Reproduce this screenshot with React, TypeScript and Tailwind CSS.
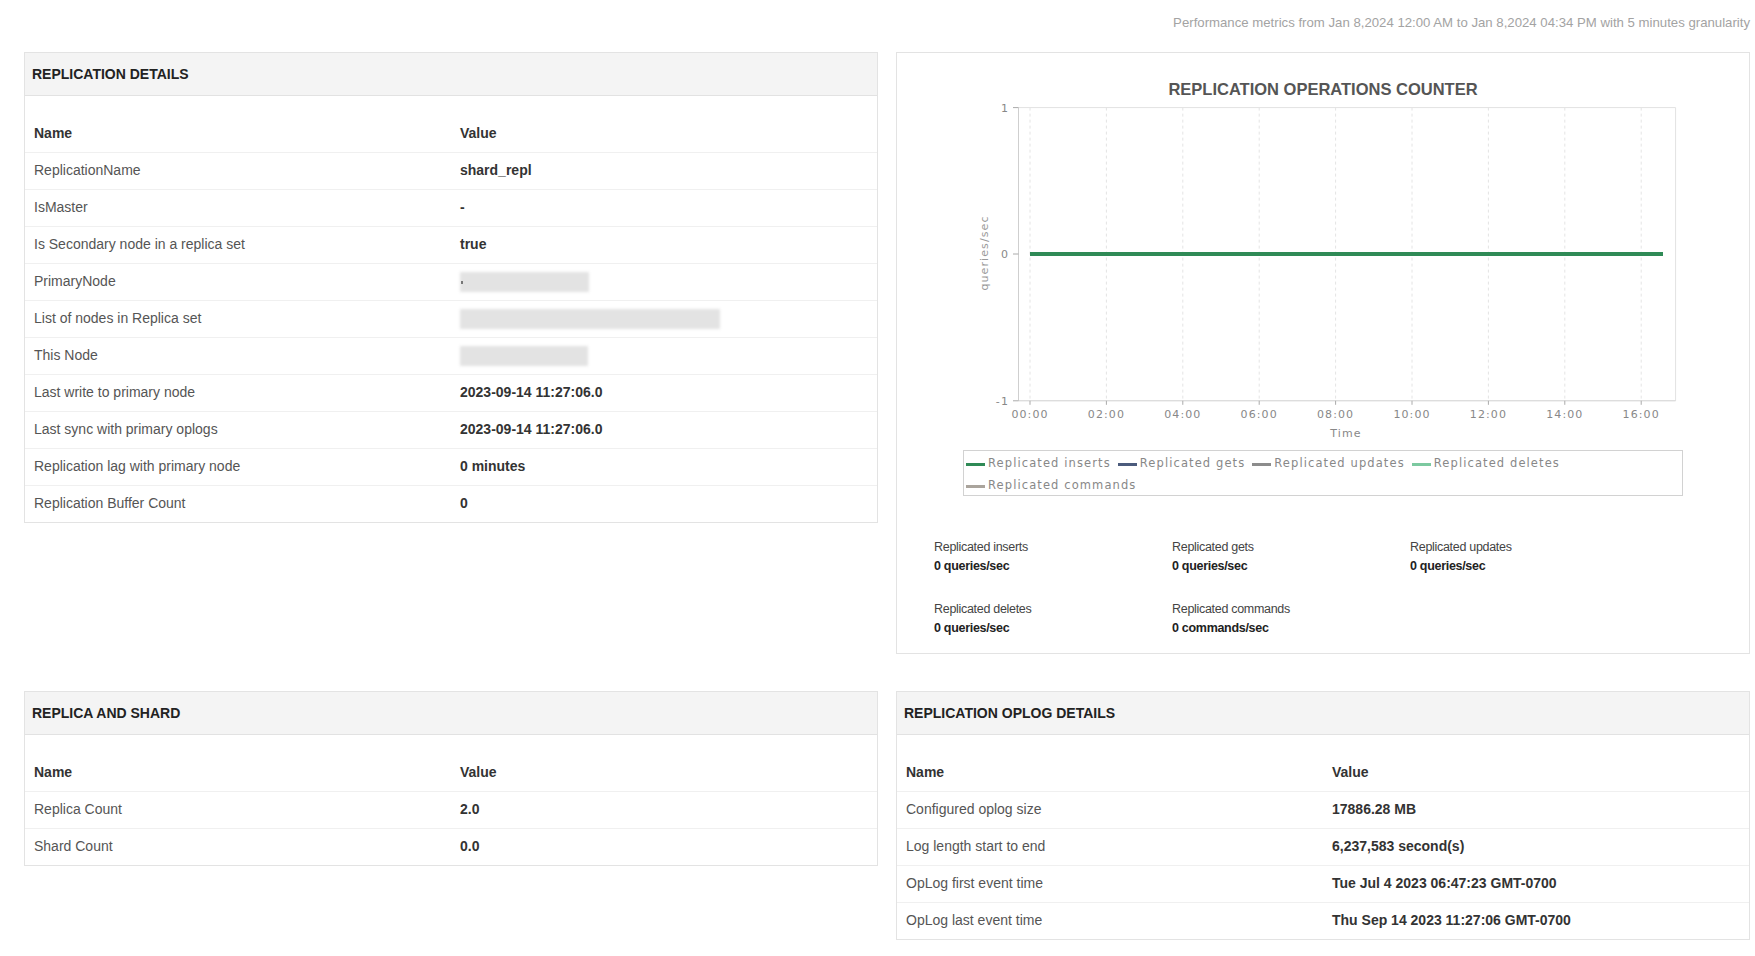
import React from "react"

type Row = { name: string; value?: string; blur?: number; dot?: boolean }

const REPLICATION: Row[] = [
  { name: "ReplicationName", value: "shard_repl" },
  { name: "IsMaster", value: "-" },
  { name: "Is Secondary node in a replica set", value: "true" },
  { name: "PrimaryNode", blur: 129, dot: true },
  { name: "List of nodes in Replica set", blur: 260 },
  { name: "This Node", blur: 128 },
  { name: "Last write to primary node", value: "2023-09-14 11:27:06.0" },
  { name: "Last sync with primary oplogs", value: "2023-09-14 11:27:06.0" },
  { name: "Replication lag with primary node", value: "0 minutes" },
  { name: "Replication Buffer Count", value: "0" },
]

const SHARD: Row[] = [
  { name: "Replica Count", value: "2.0" },
  { name: "Shard Count", value: "0.0" },
]

const OPLOG: Row[] = [
  { name: "Configured oplog size", value: "17886.28 MB" },
  { name: "Log length start to end", value: "6,237,583 second(s)" },
  { name: "OpLog first event time", value: "Tue Jul 4 2023 06:47:23 GMT-0700" },
  { name: "OpLog last event time", value: "Thu Sep 14 2023 11:27:06 GMT-0700" },
]

const LEGEND = [
  { label: "Replicated inserts", color: "#2f8a56" },
  { label: "Replicated gets", color: "#4b5b7c" },
  { label: "Replicated updates", color: "#8c8c8c" },
  { label: "Replicated deletes", color: "#7cc9a0" },
  { label: "Replicated commands", color: "#aaa49c" },
]

const STATS = [
  { label: "Replicated inserts", value: "0 queries/sec" },
  { label: "Replicated gets", value: "0 queries/sec" },
  { label: "Replicated updates", value: "0 queries/sec" },
  { label: "Replicated deletes", value: "0 queries/sec" },
  { label: "Replicated commands", value: "0 commands/sec" },
]

const TICKS = ["00:00", "02:00", "04:00", "06:00", "08:00", "10:00", "12:00", "14:00", "16:00"]

function DetailsPanel({ title, rows }: { title: string; rows: Row[] }) {
  return (
    <div className="border border-[#e3e3e3] bg-white">
      <div className="h-[43px] flex items-center px-[7px] bg-[#f4f4f4] border-b border-[#e2e2e2] text-[14px] font-bold text-[#222]">
        {title}
      </div>
      <div className="pt-[19px]">
        <table className="w-full table-fixed text-[14px]">
          <tbody>
            <tr className="h-[37px]">
              <td className="px-[9px] font-bold text-[#333]">Name</td>
              <td className="px-[9px] font-bold text-[#333]">Value</td>
            </tr>
            {rows.map((r) => (
              <tr key={r.name} className="h-[37px] border-t border-[#f0f0f0]">
                <td className="px-[9px] text-[#555]">{r.name}</td>
                <td className="px-[9px] font-bold text-[#333]">
                  {r.blur ? (
                    <div className="relative h-[20px]">
                      <div
                        className="absolute left-0 top-0 h-[20px] bg-[#e3e3e3] blur-[1.5px]"
                        style={{ width: r.blur }}
                      />
                      {r.dot && <div className="absolute left-[1px] top-[9px] w-[2px] h-[3px] bg-[#777]" />}
                    </div>
                  ) : (
                    r.value
                  )}
                </td>
              </tr>
            ))}
          </tbody>
        </table>
      </div>
    </div>
  )
}

function Chart() {
  const x0 = 121.5
  const x1 = 778.6
  const yTop = 8.6
  const yBot = 301.8
  const yZero = 155
  const axisFont = { fontFamily: "'DejaVu Sans', sans-serif", fontSize: 11, letterSpacing: 1.1 }
  return (
    <svg width={852} height={345} viewBox="0 0 852 345" className="block">
      {TICKS.map((_, i) => {
        const x = 133 + 76.4 * i
        return <line key={i} x1={x} y1={yTop} x2={x} y2={yBot} stroke="#e4e4e4" strokeDasharray="3 3" />
      })}
      <line x1={x0} y1={yTop} x2={x1} y2={yTop} stroke="#e2e2e2" />
      <line x1={x1} y1={yTop} x2={x1} y2={yBot} stroke="#e2e2e2" />
      <line x1={x0} y1={yTop} x2={x0} y2={yBot} stroke="#cfcfcf" />
      <line x1={x0} y1={yBot} x2={x1} y2={yBot} stroke="#cfcfcf" />
      {[
        { y: yTop, t: "1" },
        { y: yZero, t: "0" },
        { y: yBot, t: "-1" },
      ].map((l) => (
        <g key={l.t}>
          <line x1={116} y1={l.y} x2={121.5} y2={l.y} stroke="#aaa" />
          <text x={112} y={l.y + 4} textAnchor="end" fill="#888" style={axisFont}>
            {l.t}
          </text>
        </g>
      ))}
      {TICKS.map((t, i) => {
        const x = 133 + 76.4 * i
        return (
          <g key={t}>
            <line x1={x} y1={yBot} x2={x} y2={yBot + 4} stroke="#aaa" />
            <text x={x} y={319} textAnchor="middle" fill="#888" style={axisFont}>
              {t}
            </text>
          </g>
        )
      })}
      <text x={449} y={337.5} textAnchor="middle" fill="#888" style={axisFont}>
        Time
      </text>
      <text
        x={0}
        y={0}
        transform="translate(91 154) rotate(-90)"
        textAnchor="middle"
        fill="#999"
        style={axisFont}
      >
        queries/sec
      </text>
      <line x1={133} y1={yZero} x2={766} y2={yZero} stroke="#2f8a56" strokeWidth={4} />
    </svg>
  )
}

function ChartPanel() {
  return (
    <div className="border border-[#e3e3e3] bg-white">
      <div className="pt-[26px] text-center text-[16.5px] leading-[20px] font-bold text-[#555]">
        REPLICATION OPERATIONS COUNTER
      </div>
      <Chart />
      <div className="mt-[6px] ml-[66px] w-[720px] h-[46px] border-[1.5px] border-[#d2d2d2] flex flex-wrap content-start gap-x-[7px] pl-[2px] pt-[2px]">
        {LEGEND.map((l) => (
          <div
            key={l.label}
            className="flex items-center gap-[3px] h-[22px] text-[11.5px] tracking-[1.1px] text-[#888] font-['DejaVu_Sans',sans-serif]"
          >
            <span className="inline-block w-[19px] h-[3px]" style={{ background: l.color }} />
            {l.label}
          </div>
        ))}
      </div>
      <div className="mt-[42px] pl-[37px] pb-[15px] grid grid-cols-[238px_238px_238px] gap-y-[24px] text-[12.5px] leading-[19px] tracking-[-0.3px]">
        {STATS.map((s) => (
          <div key={s.label}>
            <div className="text-[#444]">{s.label}</div>
            <div className="font-bold text-[#222]">{s.value}</div>
          </div>
        ))}
      </div>
    </div>
  )
}

export default function App() {
  return (
    <div className="min-h-screen bg-white font-['Liberation_Sans',Arial,sans-serif] pl-[24px] pr-[5px] pt-[15px]">
      <div className="text-right text-[13.2px] leading-[16px] text-[#a3a3a3]">
        Performance metrics from Jan 8,2024 12:00 AM to Jan 8,2024 04:34 PM with 5 minutes granularity
      </div>
      <div className="mt-[21px] grid grid-cols-2 gap-x-[18px] gap-y-[37px] items-start">
        <DetailsPanel title="REPLICATION DETAILS" rows={REPLICATION} />
        <ChartPanel />
        <DetailsPanel title="REPLICA AND SHARD" rows={SHARD} />
        <DetailsPanel title="REPLICATION OPLOG DETAILS" rows={OPLOG} />
      </div>
    </div>
  )
}
